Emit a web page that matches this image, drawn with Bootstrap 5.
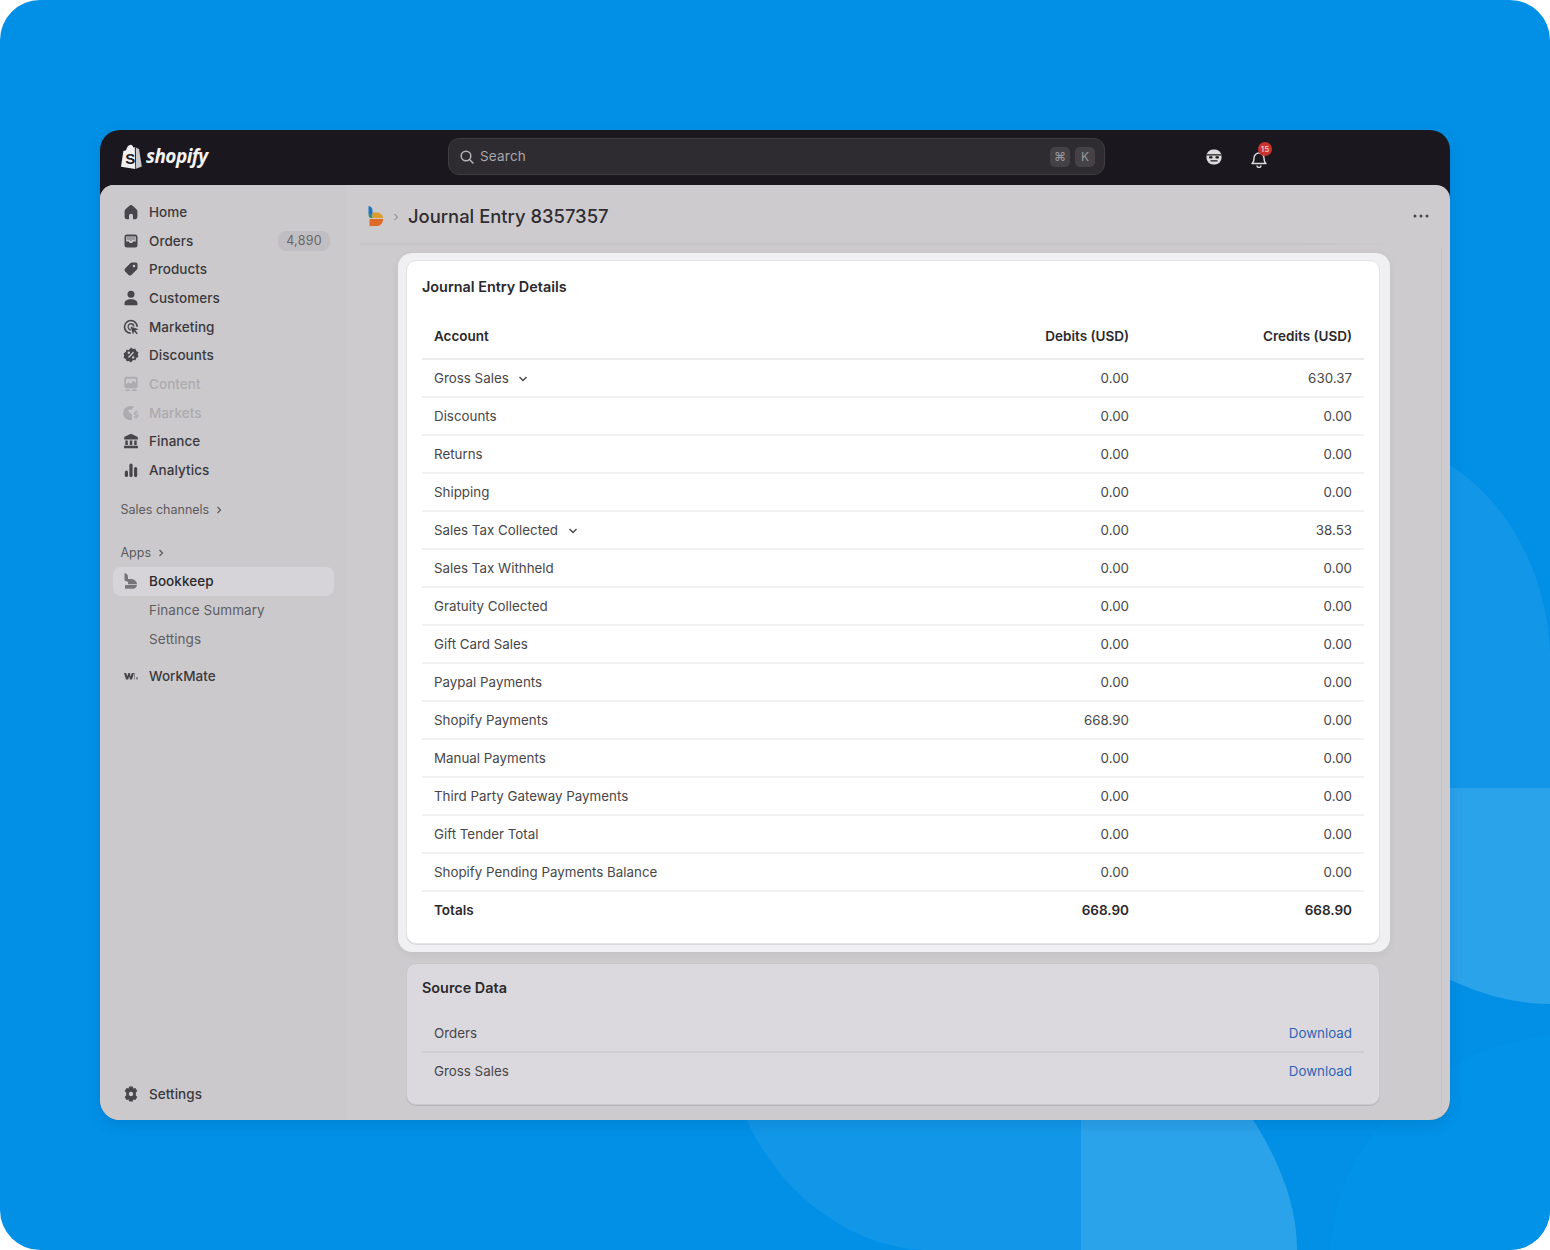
<!DOCTYPE html>
<html>
<head>
  <title>Journal Entry 8357357</title>
  <link href="https://cdn.jsdelivr.net/npm/bootstrap@5.3.0/dist/css/bootstrap.min.css" rel="stylesheet">
  <style>
    html, body { height: 1250px; background: #fff; }
    body {
      font-family: Inter, "Liberation Sans", sans-serif;
      font-size: 13.5px;
      color: #302e32;
      overflow: hidden;
    }
    .stage {
      position: relative;
      height: 1250px;
      background: #0190e6;
      border-radius: 40px;
      overflow: hidden;
      padding: 130px 100px;
    }
    .stage-art { position: absolute; left: 0; top: 0; }
    .app-frame {
      position: relative;
      height: 990px;
      background: #1a181e;
      border-radius: 20px;
      overflow: hidden;
    }
    .frame-glow {
      position: absolute;
      left: 100px;
      top: 130px;
      width: 1350px;
      height: 990px;
      border-radius: 20px;
      box-shadow: 0 5px 14px rgba(0, 60, 120, .14);
    }
    .topbar { height: 55px; }
    .brand { width: 348px; padding-left: 20px; color: #f4f3f5; margin-top: -2px; }
    .brand-name {
      font-family: "Open Sans", sans-serif;
      font-weight: 700;
      font-style: italic;
      font-size: 19px;
      letter-spacing: -.55px;
      margin-left: 4px;
      line-height: 1;
    }
    .search-box {
      width: 657px;
      height: 37px;
      margin-top: -2px;
      background: #2e2c30;
      border: 1px solid #3f3d42;
      border-radius: 11px;
      padding: 0 9px 0 11px;
      color: #a9a7ab;
    }
    .search-box span.search-word { margin-left: 6px; letter-spacing: .2px; }
    .key-cap {
      width: 20px;
      height: 20px;
      background: #444246;
      border-radius: 5px;
      font-size: 12px;
      color: #9b999d;
      margin-left: 5px;
    }
    .top-icons { margin-left: 101px; gap: 29px; margin-top: -2px; }
    .bell-wrap { position: relative; width: 16px; height: 18px; }
    .bell-badge {
      position: absolute;
      left: 7px;
      top: -6px;
      width: 14px;
      height: 14px;
      border-radius: 50%;
      background: #c8322f;
      color: #f3d8d8;
      font-size: 8px;
      font-weight: 500;
      line-height: 14px;
      text-align: center;
    }
    .app-body {
      height: 935px;
      background: #cdcbce;
      border-radius: 14px 14px 0 0;
      overflow: hidden;
    }
    .side-nav {
      width: 247px;
      flex: none;
      background: #cbc9cc;
      padding: 12.6px 13px 12px 13px;
      font-weight: 500;
      color: #3b393d;
    }
    .side-item {
      height: 28.7px;
      padding-left: 10px;
      padding-right: 4px;
      border-radius: 8px;
      letter-spacing: .05px;
    }
    .side-item svg { width: 16px; height: 16px; flex: none; margin-right: 10px; fill: #48464a; }
    .side-item.is-faded { color: #adabaf; }
    .side-item.is-faded svg { fill: #adabaf; }
    .side-item.is-active { background: #d6d4d8; color: #2c2a2e; height: 29px; }
    .side-item.is-active svg { fill: #77757a; }
    .side-sub { padding-left: 36px; color: #5f5d61; font-weight: 400; }
    .side-heading {
      padding-left: 7.5px;
      font-size: 12.5px;
      font-weight: 400;
      color: #5c5a5e;
      height: 20px;
    }
    .side-heading svg { width: 8px; height: 8px; margin-left: 6px; }
    .gap-sales { margin-top: 15.5px; }
    .gap-apps { margin-top: 23px; margin-bottom: 4px; }
    .gap-work { margin-top: 8px; }
    .count-pill {
      background: #c0bec2;
      color: #69676b;
      font-size: 12.5px;
      font-weight: 400;
      border-radius: 8px;
      padding: 1px 8px;
      line-height: 18px;
      letter-spacing: .3px;
    }
    .page-main {
      min-width: 0;
      background: linear-gradient(#c6c4c7, #c6c4c7) 1094px 62px / 1px 100% no-repeat;
    }
    .page-head {
      height: 60px;
      margin: 0 20px 0 13px;
      padding: 4px 0 0 8px;
      border-bottom: 2px solid #c6c4c7;
      border-image: linear-gradient(90deg, #c6c4c7 88%, transparent 97%) 1;
    }
    .page-title { font-size: 18.4px; font-weight: 500; color: #2f2d31; margin: 1px 0 0; }
    .crumb-arrow { width: 8px; height: 8px; margin: 1px 8px 0 8px; }
    .dots { width: 16px; height: 4px; margin-right: 1px; }
    .card-halo {
      margin: 8px 0 0 51px;
      width: 992px;
      background: #f0eff2;
      border-radius: 14px;
      padding: 7px 10px 8px 8px;
      box-shadow: 0 2px 9px rgba(0, 0, 0, .06);
    }
    .sheet {
      --bs-card-border-color: #e3e2e5;
      --bs-card-border-radius: 10px;
      --bs-card-bg: #fff;
      padding: 16px 15px 14px 15px;
      color: #302e32;
      box-shadow: 0 1px 0 #d9d8dc;
    }
    .sheet-source {
      --bs-card-bg: #dbd9dd;
      --bs-card-border-color: #c9c7cb;
      margin: 11px 0 0 59px;
      width: 974px;
      height: 142px;
      padding-top: 14px;
      box-shadow: 0 1px 0 #b9b7bb;
    }
    .sheet-title { font-size: 14.4px; font-weight: 600; color: #2b292d; margin: 0; line-height: 20px; }
    .entry-table { --bs-table-bg: transparent; --bs-table-color: #48464a; margin: 17px 0 0; font-size: 13.35px; }
    .entry-table th, .entry-table td {
      padding: 0 12px;
      height: 38px;
      vertical-align: middle;
      border-bottom: 2px solid #f1f0f2;
      font-weight: 400;
    }
    .entry-table thead th { height: 45px; font-size: 13.5px; font-weight: 600; color: #2b292d; border-bottom-color: #ecebee; }
    .entry-table tr.total-row td { border-bottom: 0; font-size: 13.5px; font-weight: 600; color: #2b292d; }
    .entry-table .num { width: 223px; text-align: right; }
    .entry-table td svg { width: 10px; height: 10px; margin-left: 6px; }
    .source-table { margin-top: 17px; }
    .source-table td { border-bottom-color: #cfcdd1; }
    .source-table tr:first-child td { height: 37px; }
    .source-table tr:last-child td { border-bottom-color: transparent; }
    .source-table a { color: #2f63b7; text-decoration: none; }
  </style>
</head>
<body>

  <div class="stage">
    <!-- background shapes -->
    <svg class="stage-art" width="1550" height="1250" viewBox="0 0 1550 1250">
      <path d="M742 1110C775 1190 850 1250 930 1250H1081V1100Z" fill="#1297e8"/>
      <path d="M1081 1100H1240C1275 1150 1297 1200 1297 1250H1081Z" fill="#2ba3ea"/>
      <path d="M1440 460C1500 490 1550 570 1550 660V788H1440Z" fill="#1297e8"/>
      <path d="M1440 788H1550V1004C1515 1004 1480 995 1440 975Z" fill="#2ba3ea"/>
      <path d="M1330 1250C1335 1150 1420 1050 1550 1035V1250Z" fill="#0292e7"/>
    </svg>
    <div class="frame-glow"></div>

    <div class="app-frame">
      <!-- Top bar -->
      <div class="topbar d-flex align-items-center">
        <div class="brand d-flex align-items-center">
          <svg width="22" height="25" viewBox="0 0 22 25"><path d="M14.800 3 13.400 3.400C12.800 1.600 11.800.7 10.600.8 8.600.9 6.800 3 6.100 6.200L3.400 7 1 22.700 15.300 25Z" fill="#f0eff1"/><path d="M15.800 3.200 17.300 4.600 19 4.800 21.800 22.500 16.100 24.800Z" fill="#c9c8cb"/><text x="5.200" y="20" font-family="Liberation Sans" font-weight="700" font-size="15" fill="#1a181e">S</text></svg>
          <span class="brand-name">shopify</span>
        </div>
        <div class="search-box d-flex align-items-center">
          <svg width="14" height="14" viewBox="0 0 14 14" fill="none" stroke="#b5b3b7" stroke-width="1.500"><circle cx="6" cy="6" r="4.800"/><path d="m9.500 9.500 3.500 3.500" stroke-linecap="round"/></svg>
          <span class="search-word">Search</span>
          <span class="key-cap d-flex align-items-center justify-content-center ms-auto">&#8984;</span>
          <span class="key-cap d-flex align-items-center justify-content-center">K</span>
        </div>
        <div class="top-icons d-flex align-items-center">
          <svg width="16" height="16" viewBox="0 0 16 16"><rect x=".5" y=".5" width="15" height="15" rx="6.500" fill="#dddcde"/><path d="M.5 5.200h15v1.400h-15Z" fill="#1a181e"/><rect x="3" y="7.200" width="3.600" height="2.200" rx="1" fill="#1a181e"/><rect x="9.400" y="7.200" width="3.600" height="2.200" rx="1" fill="#1a181e"/><path d="M4.500 11.800h7" stroke="#1a181e" stroke-width="1.300"/></svg>
          <div class="bell-wrap">
            <svg width="16" height="18" viewBox="0 0 16 18" fill="none" stroke="#dcdbdd" stroke-width="1.400"><path d="M1 13.500c1.500-1 2-2.500 2-5.500a5 5 0 0 1 10 0c0 3 .5 4.500 2 5.500Z" stroke-linejoin="round"/><path d="M6 15.500a2 2 0 0 0 4 0"/></svg>
            <span class="bell-badge">15</span>
          </div>
        </div>
      </div>

      <div class="app-body d-flex">
        <!-- Sidebar -->
        <nav class="side-nav d-flex flex-column">
          <div class="side-item d-flex align-items-center"><svg viewBox="0 0 16 16"><path d="M8 1C7.500 1 7 1.200 6.600 1.600L2.500 5.300C1.900 5.800 1.600 6.500 1.600 7.300V13c0 1.200 1 2.200 2.200 2.200H6v-3.500a2 2 0 0 1 4 0v3.500h2.200c1.200 0 2.200-1 2.200-2.200V7.300c0-.8-.3-1.500-.9-2L9.400 1.600C9 1.200 8.500 1 8 1Z"/></svg>Home</div>
          <div class="side-item d-flex align-items-center"><svg viewBox="0 0 16 16"><path d="M4 1.500h8A2.500 2.500 0 0 1 14.500 4v8a2.500 2.500 0 0 1-2.500 2.500H4A2.500 2.500 0 0 1 1.500 12V4A2.500 2.500 0 0 1 4 1.500ZM3.200 8.500h2.600l1 1.500h2.400l1-1.500h2.600V4c0-.5-.3-.8-.8-.8H4c-.5 0-.8.3-.8.800Z"/><path d="M4 3.200h8v3.800H9.500l-1 1.300h-1L6.500 7H4Z" opacity=".35"/></svg>Orders<span class="count-pill ms-auto">4,890</span></div>
          <div class="side-item d-flex align-items-center"><svg viewBox="0 0 16 16"><path d="M9 1.500h4A1.500 1.500 0 0 1 14.500 3v4a2 2 0 0 1-.6 1.400l-5.500 5.500a2 2 0 0 1-2.800 0l-3.500-3.500a2 2 0 0 1 0-2.800l5.500-5.500A2 2 0 0 1 9 1.500Zm2 2.200a1.300 1.300 0 1 0 0 2.600 1.300 1.300 0 0 0 0-2.600Z"/></svg>Products</div>
          <div class="side-item d-flex align-items-center"><svg viewBox="0 0 16 16"><circle cx="8" cy="4.300" r="3.500"/><path d="M1.500 14.500v-.8c0-2.700 2.300-4.400 6.500-4.400s6.500 1.700 6.500 4.400v.8a.7.7 0 0 1-.7.7H2.200a.7.7 0 0 1-.7-.7Z"/></svg>Customers</div>
          <div class="side-item d-flex align-items-center"><svg viewBox="0 0 16 16"><path d="M7.800.8a7.200 7.200 0 0 1 7.200 7h-1.700A5.500 5.500 0 1 0 7.800 13.300V15A7.100 7.100 0 1 1 7.800.8Z"/><path d="M7.800 4a3.800 3.800 0 0 1 3.800 3.500H10A2.200 2.200 0 1 0 7.800 10v1.700A3.900 3.900 0 0 1 7.800 4Z"/><path d="m7.500 7.500 8 2.700-3.200 1.300 2.500 2.700-1.100 1.100-2.500-2.700-1.200 3Z"/></svg>Marketing</div>
          <div class="side-item d-flex align-items-center"><svg viewBox="0 0 16 16"><path fill-rule="evenodd" d="m8 .5 2 1.400 2.400-.2.900 2.300 2.100 1.200-.6 2.300.6 2.300-2.100 1.200-.9 2.300-2.400-.2L8 15.500 6 14.100l-2.400.2-.9-2.300L.6 10.800l.6-2.300-.6-2.300 2.100-1.200.9-2.300 2.400.2ZM10 4.800 5 10l1 1 5-5.200ZM5.800 4.600a1.200 1.200 0 1 0 0 2.400 1.200 1.200 0 0 0 0-2.400Zm4.400 4.600a1.200 1.200 0 1 0 0 2.400 1.200 1.200 0 0 0 0-2.400Z"/></svg>Discounts</div>
          <div class="side-item is-faded d-flex align-items-center"><svg viewBox="0 0 16 16"><path fill-rule="evenodd" d="M3.500 .8h9A2.200 2.200 0 0 1 14.700 3v7a2.200 2.200 0 0 1-2.200 2.200h-9A2.200 2.200 0 0 1 1.300 10V3A2.200 2.200 0 0 1 3.500 .8ZM3 8.500l2.700-2.300 2 1.500 2.800-2.900 2.500 2V3.200c0-.3-.2-.5-.5-.5h-9c-.3 0-.5.2-.5.5Z"/><rect x="2" y="13.400" width="5" height="1.600" rx=".8"/><rect x="8.500" y="13.400" width="5.500" height="1.600" rx=".8"/></svg>Content</div>
          <div class="side-item is-faded d-flex align-items-center"><svg viewBox="0 0 16 16"><path d="M7.500 1a7 7 0 0 1 3.500.9L8.500 4.500 5 5l1.500 2.700L9 9.500v5.200A7 7 0 1 1 7.500 1Z"/><path d="M12.500 5.500h1.200v1.100c.8.200 1.500.7 1.700 1.400h-1.300c-.2-.3-.6-.4-1-.4-.6 0-1 .2-1 .6 0 .9 3.500.5 3.500 2.700 0 .9-.7 1.500-1.900 1.700v1.100h-1.200v-1.100c-.9-.2-1.600-.7-1.800-1.600h1.300c.2.400.6.600 1.100.6.700 0 1.100-.2 1.100-.6 0-1-3.400-.4-3.400-2.600 0-.9.700-1.500 1.700-1.700Z"/></svg>Markets</div>
          <div class="side-item d-flex align-items-center"><svg viewBox="0 0 16 16"><path d="M8 .8 14.800 4v2.500H1.200V4ZM2.300 7.500h2.500V12H2.300Zm4.450 0h2.500V12h-2.500Zm4.450 0h2.500V12h-2.500ZM1 12.800h14v2.400H1Z"/></svg>Finance</div>
          <div class="side-item d-flex align-items-center"><svg viewBox="0 0 16 16"><rect x="1.800" y="8.500" width="3.200" height="6.500" rx="1.600"/><rect x="6.400" y="1.500" width="3.200" height="13.500" rx="1.600"/><rect x="11" y="5" width="3.200" height="10" rx="1.600"/></svg>Analytics</div>

          <div class="side-heading gap-sales d-flex align-items-center">Sales channels<svg viewBox="0 0 8 8" fill="none" stroke="#5c5a5e" stroke-width="1.200"><path d="m2.500 1 3 3-3 3"/></svg></div>
          <div class="side-heading gap-apps d-flex align-items-center">Apps<svg viewBox="0 0 8 8" fill="none" stroke="#5c5a5e" stroke-width="1.200"><path d="m2.500 1 3 3-3 3"/></svg></div>

          <div class="side-item is-active d-flex align-items-center"><svg viewBox="0 0 16 16"><path d="M1.500 0C4 .4 5 2 5 4v5L1.500 7.500Z"/><path d="M5 6h2.500c3.500 0 6 1.500 6.500 5.200H5Z"/><path d="M2 12H14c-.4 2.300-1.800 3.800-4 3.800H2Z"/></svg>Bookkeep</div>
          <div class="side-item side-sub d-flex align-items-center">Finance Summary</div>
          <div class="side-item side-sub d-flex align-items-center">Settings</div>
          <div class="side-item gap-work d-flex align-items-center"><svg viewBox="0 0 16 16"><path d="M1 5h2.200l1 3.500L5.300 5h1.500l1 3.500L8.800 5H11L9 11.500H7l-.9-3-.9 3H3Z"/><path d="M11 5h1v6.500h-1Zm2 4h2v2.500h-2Z" opacity=".5"/></svg>WorkMate</div>
          <div class="side-item mt-auto d-flex align-items-center"><svg viewBox="0 0 16 16"><path fill-rule="evenodd" d="M6.200.4h3.600l.6 2.100 2-.6 1.900 3.100L12.800 6.600l0 2.800 1.500 1.600-1.900 3.100-2-.6-.6 2.100H6.200l-.6-2.100-2 .6-1.900-3.100 1.500-1.600 0-2.800L1.700 5l1.900-3.100 2 .6ZM8 5.800a2.200 2.200 0 1 0 0 4.400 2.200 2.200 0 0 0 0-4.400Z"/></svg>Settings</div>
        </nav>

        <!-- Page -->
        <main class="page-main flex-grow-1">
          <div class="page-head d-flex align-items-center">
            <svg width="16" height="21" viewBox="0 0 16 21"><path d="M.5 0C3 .5 4.500 2 4.500 4.500V10L.5 8Z" fill="#1d74c0"/><path d="M.5 8l4 2v2H3C1.500 12 .5 10.500.5 8Z" fill="#2c8a6a"/><path d="M4.500 6.500H8c4 0 6.500 2 7.200 5.500H4.500Z" fill="#dd9c2c"/><path d="M1.500 13H15.200c-.4 4-2.700 7-6 7H1.500c0-1 0-5 0-7Z" fill="#df6a26"/></svg>
            <svg class="crumb-arrow" viewBox="0 0 8 8" fill="none" stroke="#7a787c" stroke-width="1"><path d="m2.500 1 3 3-3 3"/></svg>
            <h1 class="page-title">Journal Entry 8357357</h1>
            <svg class="dots ms-auto" viewBox="0 0 16 4" fill="#4a484c"><circle cx="2" cy="2" r="1.500"/><circle cx="8" cy="2" r="1.500"/><circle cx="14" cy="2" r="1.500"/></svg>
          </div>

          <div class="card-halo">
            <div class="card sheet">
              <h2 class="sheet-title">Journal Entry Details</h2>
              <table class="table entry-table">
                <thead>
                  <tr><th>Account</th><th class="num">Debits (USD)</th><th class="num">Credits (USD)</th></tr>
                </thead>
                <tbody>
                  <tr><td>Gross Sales <svg viewBox="0 0 10 10" fill="none" stroke="#48464a" stroke-width="1.400"><path d="m1.500 3 3.500 3.500L8.500 3"/></svg></td><td class="num">0.00</td><td class="num">630.37</td></tr>
                  <tr><td>Discounts</td><td class="num">0.00</td><td class="num">0.00</td></tr>
                  <tr><td>Returns</td><td class="num">0.00</td><td class="num">0.00</td></tr>
                  <tr><td>Shipping</td><td class="num">0.00</td><td class="num">0.00</td></tr>
                  <tr><td>Sales Tax Collected <svg viewBox="0 0 10 10" fill="none" stroke="#48464a" stroke-width="1.400"><path d="m1.500 3 3.500 3.500L8.500 3"/></svg></td><td class="num">0.00</td><td class="num">38.53</td></tr>
                  <tr><td>Sales Tax Withheld</td><td class="num">0.00</td><td class="num">0.00</td></tr>
                  <tr><td>Gratuity Collected</td><td class="num">0.00</td><td class="num">0.00</td></tr>
                  <tr><td>Gift Card Sales</td><td class="num">0.00</td><td class="num">0.00</td></tr>
                  <tr><td>Paypal Payments</td><td class="num">0.00</td><td class="num">0.00</td></tr>
                  <tr><td>Shopify Payments</td><td class="num">668.90</td><td class="num">0.00</td></tr>
                  <tr><td>Manual Payments</td><td class="num">0.00</td><td class="num">0.00</td></tr>
                  <tr><td>Third Party Gateway Payments</td><td class="num">0.00</td><td class="num">0.00</td></tr>
                  <tr><td>Gift Tender Total</td><td class="num">0.00</td><td class="num">0.00</td></tr>
                  <tr><td>Shopify Pending Payments Balance</td><td class="num">0.00</td><td class="num">0.00</td></tr>
                  <tr class="total-row"><td>Totals</td><td class="num">668.90</td><td class="num">668.90</td></tr>
                </tbody>
              </table>
            </div>
          </div>

          <div class="card sheet sheet-source">
            <h2 class="sheet-title">Source Data</h2>
            <table class="table entry-table source-table">
              <tbody>
                <tr><td>Orders</td><td class="num"><a href="#">Download</a></td></tr>
                <tr><td>Gross Sales</td><td class="num"><a href="#">Download</a></td></tr>
              </tbody>
            </table>
          </div>
        </main>
      </div>
    </div>
  </div>

  <script src="https://cdn.jsdelivr.net/npm/bootstrap@5.3.0/dist/js/bootstrap.bundle.min.js"></script>
</body>
</html>
